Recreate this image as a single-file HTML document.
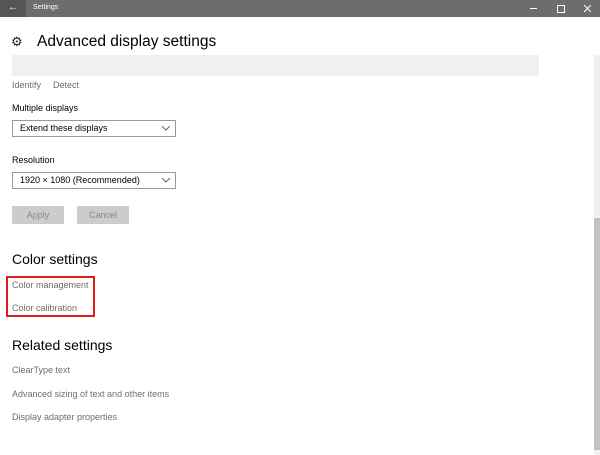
<!DOCTYPE html><html><head><style>
body{margin:0;width:600px;height:455px;overflow:hidden;background:#fff;font-family:"Liberation Sans",sans-serif;position:relative}
.a{position:absolute;white-space:nowrap}
.t{font-size:9px;color:#000}
.l{font-size:9px;color:#6e6e6e}
.dd{position:absolute;left:12px;width:164px;height:17px;border:1px solid #999;box-sizing:border-box;font-size:9px;line-height:15px;padding-left:7px}
.dd svg{position:absolute;right:5px;top:5px}
.b{position:absolute;top:206px;width:52px;height:18px;background:#ccc;color:#888;font-size:9px;text-align:center;line-height:18px}
</style></head><body>
<div class="a" style="left:0;top:0;width:600px;height:17px;background:#6d6d6d"></div>
<div class="a" style="left:0;top:0;width:26px;height:17px;background:#555"></div>
<div class="a" style="left:8px;top:2px;color:#fff;font-size:10px">←</div>
<div class="a" style="left:33px;top:4px;color:#fff;font-size:7px">Settings</div>
<div class="a" style="left:530px;top:8px;width:7px;height:1px;background:#fff"></div>
<div class="a" style="left:557px;top:5px;width:6px;height:6px;border:1px solid #fff"></div>
<svg class="a" style="left:584px;top:5px" width="7" height="7"><path d="M0 0L7 7M7 0L0 7" stroke="#fff"/></svg>
<div class="a" style="left:11px;top:34px;font-size:13px;color:#222">⚙</div>
<div class="a" style="left:37px;top:33px;font-size:15.5px;color:#000">Advanced display settings</div>
<div class="a" style="left:12px;top:55px;width:527px;height:21px;background:#f0f0f0"></div>
<div class="a l" style="left:12px;top:80px">Identify</div>
<div class="a l" style="left:53px;top:80px">Detect</div>
<div class="a t" style="left:12px;top:103px">Multiple displays</div>
<div class="dd" style="top:120px">Extend these displays<svg width="8" height="5"><path d="M0 0L4 4L8 0" stroke="#666" fill="none"/></svg></div>
<div class="a t" style="left:12px;top:155px">Resolution</div>
<div class="dd" style="top:172px">1920 × 1080 (Recommended)<svg width="8" height="5"><path d="M0 0L4 4L8 0" stroke="#666" fill="none"/></svg></div>
<div class="b" style="left:12px">Apply</div>
<div class="b" style="left:77px">Cancel</div>
<div class="a" style="left:12px;top:251px;font-size:14px;color:#000">Color settings</div>
<div class="a" style="left:6px;top:276px;width:89px;height:41px;border:2px solid #e21b1b;box-sizing:border-box"></div>
<div class="a l" style="left:12px;top:280px">Color management</div>
<div class="a l" style="left:12px;top:303px">Color calibration</div>
<div class="a" style="left:12px;top:337px;font-size:14px;color:#000">Related settings</div>
<div class="a l" style="left:12px;top:365px">ClearType text</div>
<div class="a l" style="left:12px;top:389px">Advanced sizing of text and other items</div>
<div class="a l" style="left:12px;top:412px">Display adapter properties</div>
<div class="a" style="left:594px;top:55px;width:6px;height:400px;background:#f0f0f0"></div>
<div class="a" style="left:594px;top:218px;width:6px;height:232px;background:#c2c2c2"></div>
</body></html>
